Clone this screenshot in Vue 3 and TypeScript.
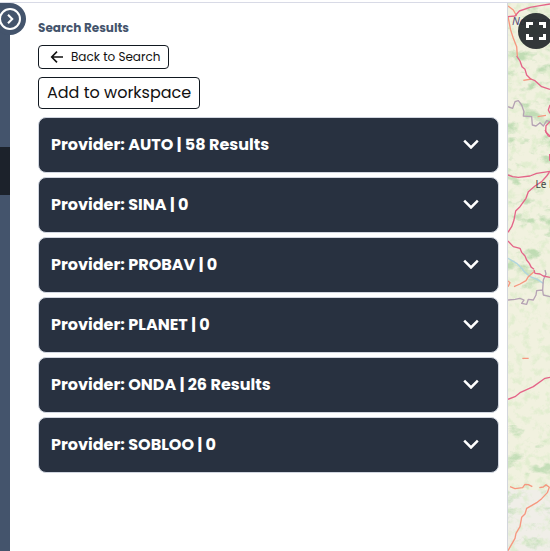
<script setup lang="ts">
interface Provider {
  name: string
  count: string
}

const providers: Provider[] = [
  { name: 'AUTO', count: '58 Results' },
  { name: 'SINA', count: '0' },
  { name: 'PROBAV', count: '0' },
  { name: 'PLANET', count: '0' },
  { name: 'ONDA', count: '26 Results' },
  { name: 'SOBLOO', count: '0' },
]
</script>

<template>
  <div class="app">
    <aside class="rail">
      <div class="rail-active"></div>
      <button class="toggle" aria-label="Collapse panel">
        <svg viewBox="0 0 32 32" width="32" height="32" fill="none" stroke="#fff">
          <circle cx="16" cy="16" r="10" stroke-width="2" />
          <path d="M14 11.8l4.2 4.2-4.2 4.2" stroke-width="2.1" />
        </svg>
      </button>
    </aside>

    <main class="panel">
      <h2 class="title">Search Results</h2>
      <button class="back">
        <svg viewBox="0 0 14 14" width="14" height="14" fill="none" stroke="#111" stroke-width="1.6">
          <path d="M13 7H2M7 1.6L1.7 7 7 12.4" />
        </svg>
        <span>Back to Search</span>
      </button>
      <button class="add">Add to workspace</button>
      <div class="list">
        <div v-for="p in providers" :key="p.name" class="card">
          <span class="label">Provider: {{ p.name }} | {{ p.count }}</span>
          <svg viewBox="0 0 16 10" width="16" height="10" fill="none" stroke="#fff" stroke-width="2.5">
            <path d="M1.2 1.7L8 8.5l6.8-6.8" />
          </svg>
        </div>
      </div>
    </main>

    <section class="map">
      <svg class="tiles" viewBox="508 3 42 548" width="42" height="548" fill="none">
        <defs>
          <filter id="woods" x="0" y="0" width="1" height="1" color-interpolation-filters="sRGB">
            <feTurbulence type="fractalNoise" baseFrequency="0.05 0.08" numOctaves="5" seed="8" />
            <feColorMatrix values="0 0 0 0 .7  0 0 0 0 .84  0 0 0 0 .66  5 0 0 0 -2.8" />
          </filter>
          <filter id="fields" x="0" y="0" width="1" height="1" color-interpolation-filters="sRGB">
            <feTurbulence type="fractalNoise" baseFrequency="0.13" numOctaves="4" seed="21" />
            <feColorMatrix values="0 0 0 0 .83  0 0 0 0 .92  0 0 0 0 .76  0 4 0 0 -1.95" />
          </filter>
        </defs>
        <rect x="508" y="3" width="42" height="548" fill="#f1f1df" />
        <rect x="508" y="490" width="42" height="61" fill="#f0eee8" />
        <rect x="508" y="3" width="42" height="548" filter="url(#fields)" opacity=".5" />
        <rect x="508" y="3" width="42" height="287" filter="url(#woods)" opacity=".75" />
        <rect x="508" y="425" width="42" height="126" filter="url(#woods)" opacity=".7" />

        <g transform="scale(.33333)" stroke-width="4" stroke-linejoin="round">
          <g transform="translate(1500 0)">
            <path class="border" d="M24 320L38 325 45 305 55 302 65 315 72 335 70 348 95 350 97 375 108 378 120 368 130 378 140 362 150 365" />
            <path class="primary" d="M24 18L40 30 50 48M24 50L32 90 40 115 50 140 52 168M70 241L95 237M113 350L138 346" />
            <path class="motorway" d="M24 50L45 48 58 33 90 22 120 17 150 12M50 168L60 183 66 200 75 208 80 225 92 237 105 242 125 260 150 268M150 315L145 330 150 340M150 365L138 377 137 395 145 408 150 410" />
          </g>
          <g transform="translate(1500 390)">
            <path class="river" d="M24 385L50 400 70 420" />
            <path class="motorway" d="M135 0L141 10 150 18M149 72L149 92M24 135L38 140 55 142 90 138 110 130 150 124 140 138 125 155 105 168 85 185 78 205 60 230 47 243 42 270 35 290 24 307M24 333L40 350 60 355 65 367 75 378 80 390 88 400 94 412 102 418" />
          </g>
          <g transform="translate(1500 810)">
            <path class="river" d="M68 0L90 20 112 28 130 40" />
            <path class="border" d="M135 0L138 12 130 30 128 60 110 62 108 75 100 90 85 88 80 103 65 100 72 90 60 85 45 88 24 90M128 60L130 75 150 80" />
            <path class="primary" d="M102 5L85 20 78 32 60 42 42 50M24 33L30 38 24 50M67 265L86 265" />
            <path class="motorway" d="M102 0L105 10 120 12 130 18 150 22M24 388L45 380 60 368 100 350 135 325 150 322" />
          </g>
          <g transform="translate(1500 1230)">
            <path class="primary" d="M30 230L45 236 68 233 75 223 85 224 97 230M118 233L130 231 138 224 148 232 142 248 125 266 110 278 80 295 75 312 65 322 60 350 48 370 45 385 24 422" />
          </g>
        </g>
        <text class="region" x="512" y="25">Norman</text>
        <text class="town" x="535.5" y="188">Le M</text>
      </svg>
      <button class="fullscreen" aria-label="Full screen">
        <svg viewBox="0 0 20 18" width="20" height="18" fill="none" stroke="#fff" stroke-width="3">
          <path d="M1.5 6V1.5H7M13 1.5h5.5V6M18.5 12v4.5H13M7 16.5H1.5V12" />
        </svg>
      </button>
    </section>
  </div>
</template>

<style>
body {
  margin: 0;
  overflow: hidden;
}
</style>

<style scoped>
.app {
  box-sizing: border-box;
  display: flex;
  width: 550px;
  height: 549px;
  border-top: 1px solid #d8dae6;
  margin-top: 2px;
  overflow: hidden;
  background: #fff;
  font-family: Poppins, Inter, sans-serif;
}
button {
  font-family: inherit;
  padding: 0;
  white-space: nowrap;
}
.rail {
  position: relative;
  flex: none;
  box-sizing: border-box;
  width: 10px;
  padding-top: 144px;
  background: #44546c;
}
.rail-active {
  height: 48px;
  background: #1c222b;
}
.toggle {
  position: absolute;
  top: 0;
  left: -6px;
  width: 32px;
  height: 32px;
  border: 0;
  border-radius: 50%;
  background: #44546c;
}
.toggle svg {
  display: block;
}
.panel {
  box-sizing: border-box;
  flex: none;
  display: flex;
  flex-direction: column;
  align-items: flex-start;
  width: 497px;
  padding: 16px 8px 0 28px;
}
.title {
  margin: 0 0 8px;
  font-size: 12px;
  line-height: 18px;
  font-weight: 700;
  color: #44546c;
}
.back,
.add {
  box-sizing: border-box;
  display: flex;
  align-items: center;
  border: 1px solid #111820;
  border-radius: 4px;
  background: #fff;
  color: #111;
}
.back {
  width: 131px;
  height: 24px;
  padding-left: 11px;
  gap: 7px;
  font-size: 12px;
}
.add {
  width: 162px;
  height: 32px;
  margin-top: 8px;
  padding-left: 8px;
  padding-bottom: 1px;
  font-size: 16px;
}
.list {
  display: flex;
  flex-direction: column;
  gap: 4px;
  width: 461px;
  margin-top: 8px;
}
.card {
  box-sizing: border-box;
  display: flex;
  align-items: center;
  justify-content: space-between;
  height: 56px;
  padding: 0 19px 2px 12px;
  border: 1px solid #d0d5df;
  border-radius: 8px;
  background: #283140;
  color: #fff;
}
.label {
  font-size: 16px;
  font-weight: 700;
  white-space: nowrap;
}
.map {
  position: relative;
  flex: none;
  box-sizing: border-box;
  width: 43px;
  border-left: 1px solid #d3d6dd;
}
.tiles {
  display: block;
}
.motorway {
  stroke: #e46488;
}
.primary {
  stroke: #f6977f;
}
.border {
  stroke: #b5a2b4;
}
.river {
  stroke: #b0d5df;
}
.region {
  fill: #5c4a78;
  font: italic 11px "Noto Sans", sans-serif;
}
.town {
  fill: #444;
  font: 10px "Noto Sans", sans-serif;
}
.fullscreen {
  position: absolute;
  left: 10px;
  top: 10px;
  display: grid;
  place-items: center;
  width: 36px;
  height: 36px;
  border: 0;
  border-radius: 50%;
  background: rgba(40, 45, 48, 0.95);
}
</style>
